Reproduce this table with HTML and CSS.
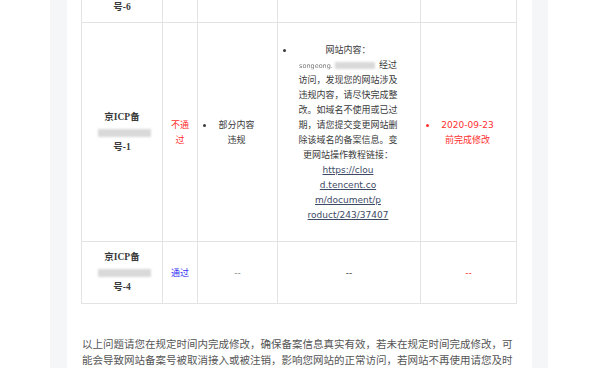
FILE: index.html
```html
<!DOCTYPE html>
<html lang="zh-CN">
<head>
<meta charset="utf-8">
<title>备案核查结果</title>
<link rel="stylesheet" href="styles.css">
</head>
<body>
<div class="page">
  <div class="card">
    <table class="tbl">
      <colgroup>
        <col class="w1"><col class="w2"><col class="w3"><col class="w4"><col class="w5">
      </colgroup>
      <tr class="r-first">
        <td class="cid"><div>号-6</div></td>
        <td></td>
        <td></td>
        <td></td>
        <td></td>
      </tr>
      <tr>
        <td class="cid"><div>京ICP备</div><div class="bl"><span class="blot"></span></div><div>号-1</div></td>
        <td class="cst red">不通过</td>
        <td class="cl"><ul class="lst"><li>部分内容违规</li></ul></td>
        <td class="cl"><ul class="lst big"><li>网站内容：<br><span class="nw"><span class="dom">songeong.</span><span class="blot wide"></span>经过</span><br>访问，发现您的网站涉及<br>违规内容，请尽快完成整<br>改。如域名不使用或已过<br>期，请您提交变更网站删<br>除该域名的备案信息。变<br>更网站操作教程链接：<br><a class="lnk lat" href="#">https://clou<br>d.tencent.co<br>m/document/p<br>roduct/243/37407</a></li></ul></td>
        <td class="cl red"><ul class="lst"><li><span class="lat">2020-09-23</span>前完成修改</li></ul></td>
      </tr>
      <tr>
        <td class="cid"><div>京ICP备</div><div class="bl"><span class="blot"></span></div><div>号-4</div></td>
        <td class="cst blue">通过</td>
        <td class="muted"><span class="lat">--</span></td>
        <td><span class="lat">--</span></td>
        <td class="red"><span class="lat">--</span></td>
      </tr>
    </table>
    <p class="note">以上问题请您在规定时间内完成修改，确保备案信息真实有效，若未在规定时间完成修改，可<br>能会导致网站备案号被取消接入或被注销，影响您网站的正常访问，若网站不再使用请您及时</p>
  </div>
</div>
</body>
</html>
```
FILE: styles.css
```css
html, body {
  margin: 0;
  padding: 0;
  background: #ffffff;
  overflow: hidden;
}
body {
  font-family: "Noto Sans CJK SC", sans-serif;
  color: #333333;
}
.page {
  margin: 0 52px 0 50px;
  padding: 0 16px 0 17px;
  background: #f5f6f8;
  min-height: 520px;
}
.card {
  background: #ffffff;
  padding: 0 16px 80px 14px;
  min-height: 440px;
}
.tbl {
  margin-top: -31px;
  width: 435px;
  border-collapse: collapse;
  table-layout: fixed;
  font-size: 9px;
  line-height: 15px;
}
.w1 { width: 81px; }
.w2 { width: 35px; }
.w3 { width: 80px; }
.w4 { width: 143px; }
.w5 { width: 96px; }
.tbl td {
  border: 1px solid #e3e3e3;
  padding: 8px;
  text-align: center;
  vertical-align: middle;
  color: #3a3a3a;
}
.r-first td {
  padding-top: 30px;
  padding-bottom: 7px;
  vertical-align: bottom;
}
.cid {
  font-family: "Liberation Serif", "Noto Sans CJK SC", serif;
  font-weight: bold;
  font-size: 9.5px;
  color: #1e1e1e;
}
.bl {
  height: 15px;
}
.blot {
  display: inline-block;
  width: 53px;
  height: 8px;
  margin-left: 4px;
  margin-top: 4px;
  vertical-align: top;
  background: #d9d9d9;
  filter: blur(1px);
}
.blot.wide {
  width: 40px;
  height: 7px;
  margin: 0 4px 0 2px;
  vertical-align: middle;
}
.nw {
  white-space: nowrap;
}
.dom {
  font-family: "DejaVu Sans", sans-serif;
  font-size: 6.5px;
  line-height: 8px;
  color: #777777;
  filter: blur(0.4px);
}
.cst {
  padding-left: 8px;
  padding-right: 8px;
}
.tbl td.red, .tbl td.red .lat { color: #ff3030; }
.tbl td.blue { color: #3434f0; }
.tbl td.muted { color: #888888; }
.lat {
  font-family: "DejaVu Sans", sans-serif;
  line-height: 10px;
}
.lst {
  margin: 0 12px 0 0;
  padding-left: 10px;
  text-align: center;
}
.lst.big {
  margin: 11px 12px 11px 0;
}
.lst li {
  list-style: disc;
}
.lnk {
  color: #3d4a66;
  text-decoration: underline;
}
.note {
  margin: 32px 0 0 1px;
  font-size: 10.5px;
  line-height: 16px;
  color: #555555;
  white-space: nowrap;
}
```
